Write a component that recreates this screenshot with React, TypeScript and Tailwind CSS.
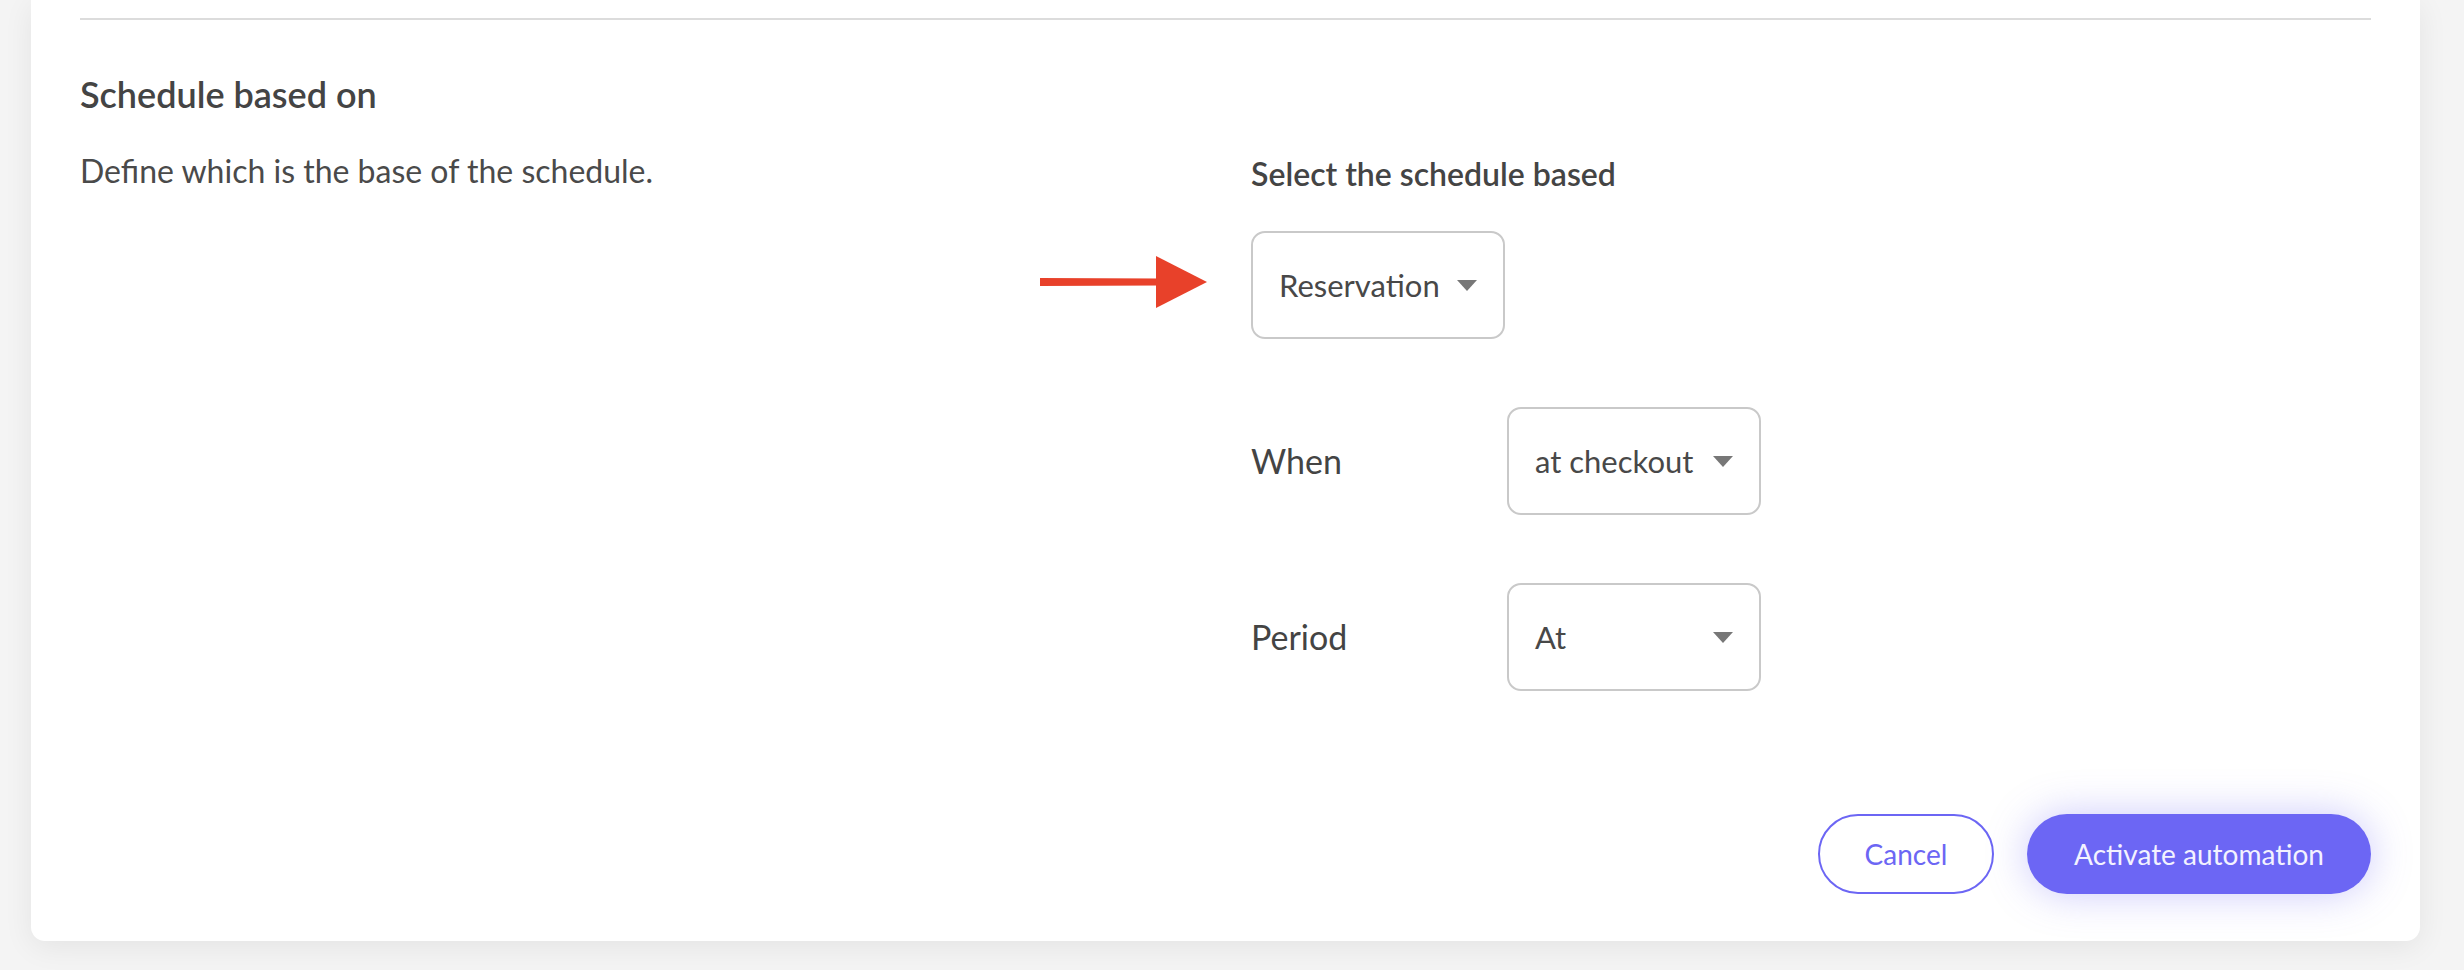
import React from "react";

function Caret() {
  return (
    <svg width="20" height="11" viewBox="0 0 20 11" className="shrink-0">
      <path d="M0 0 L20 0 L10 11 Z" fill="#777777" />
    </svg>
  );
}

function SelectBox({ value }: { value: string }) {
  return (
    <div className="flex h-[108px] w-[254px] items-center justify-between rounded-[14px] border-2 border-[#c9c9c9] bg-white px-[26px]">
      <span className="text-[31px] leading-[40px] text-[#484848]">{value}</span>
      <Caret />
    </div>
  );
}

export default function App() {
  return (
    <div
      className="min-h-screen w-full bg-[#f4f4f4]"
      style={{ fontFamily: "Lato, 'Open Sans', sans-serif" }}
    >
      <div className="ml-[31px] w-[2389px] rounded-b-[14px] bg-white px-[49px] pb-[47px] pt-[18px] shadow-[0_6px_30px_rgba(0,0,0,0.07)]">
        <div className="h-[2px] w-full bg-[#dcdcdc]" />
        <div className="flex">
          <div className="w-[1171px] shrink-0">
            <h2 className="mt-[50px] text-[36px] font-semibold leading-[48px] text-[#444444]">
              Schedule based on
            </h2>
            <p className="mt-[33px] text-[32px] leading-[40px] text-[#4a4a4a]">
              Define which is the base of the schedule.
            </p>
          </div>
          <div className="pt-[134px]">
            <div className="text-[32px] font-semibold leading-[40px] text-[#444444]">
              Select the schedule based
            </div>
            <div className="relative mt-[37px] w-[254px]">
              <svg
                className="absolute left-[-211px] top-[25px]"
                width="167"
                height="52"
                viewBox="0 0 167 52"
              >
                <path d="M0 22 L120 22.5 L120 29.5 L0 30 Z" fill="#e8412a" />
                <path d="M116 0 L167 26 L116 52 Z" fill="#e8412a" />
              </svg>
              <SelectBox value="Reservation" />
            </div>
            <div className="mt-[68px] flex items-center">
              <span className="w-[256px] text-[34px] leading-[44px] text-[#444444]">When</span>
              <SelectBox value="at checkout" />
            </div>
            <div className="mt-[68px] flex items-center">
              <span className="w-[256px] text-[34px] leading-[44px] text-[#444444]">Period</span>
              <SelectBox value="At" />
            </div>
          </div>
        </div>
        <div className="mt-[123px] flex justify-end gap-[33px]">
          <button className="flex h-[80px] w-[176px] items-center justify-center rounded-full border-2 border-[#6c66f4] bg-white text-[28px] text-[#6c66f4]">
            Cancel
          </button>
          <button className="flex h-[80px] w-[344px] items-center justify-center rounded-full bg-[#6c66f4] text-[28px] text-[#f3f2ff] shadow-[0_0_40px_rgba(108,102,244,0.35)]">
            Activate automation
          </button>
        </div>
      </div>
    </div>
  );
}
